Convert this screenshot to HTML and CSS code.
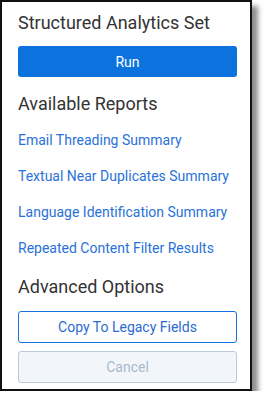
FILE: index.html
```html
<!DOCTYPE html>
<html lang="en">
<head>
    <meta charset="UTF-8">
    <meta name="viewport" content="width=device-width, initial-scale=1.0">
    <title>Structured Analytics Set</title>
    <link rel="stylesheet" href="styles.css">
</head>
<body>
    <div class="panel">
        <h2 class="section-title">Structured Analytics Set</h2>
        <button class="btn btn-primary run-btn">Run</button>

        <h2 class="section-title reports-title">Available Reports</h2>
        <div class="report-list">
            <a href="#" class="report-link">Email Threading Summary</a>
            <a href="#" class="report-link">Textual Near Duplicates Summary</a>
            <a href="#" class="report-link">Language Identification Summary</a>
            <a href="#" class="report-link">Repeated Content Filter Results</a>
        </div>

        <h2 class="section-title options-title">Advanced Options</h2>
        <div class="option-buttons">
            <button class="btn btn-outline">Copy To Legacy Fields</button>
            <button class="btn btn-disabled" disabled>Cancel</button>
        </div>
    </div>
</body>
</html>
```

FILE: styles.css
```css
* {
    margin: 0;
    padding: 0;
    box-sizing: border-box;
}
body {
    font-family: Roboto, "Liberation Sans", sans-serif;
    background: #fff;
}
.panel {
    width: 252px;
    height: 391px;
    padding: 10px 13px 0 16px;
    border: 2px solid #111;
    background: #fff;
    box-shadow: 6px 6px 5px rgba(0, 0, 0, 0.45);
    display: flex;
    flex-direction: column;
}
.section-title {
    font-size: 18px;
    line-height: 22px;
    font-weight: 400;
    color: #333;
}
.btn {
    width: 100%;
    height: 32px;
    font-family: inherit;
    font-size: 14px;
    border-radius: 3px;
    cursor: pointer;
}
.btn-primary {
    background: #0b72de;
    color: #fff;
    border: none;
}
.run-btn {
    margin-top: 12px;
    height: 31px;
}
.reports-title {
    margin-top: 16px;
}
.report-list {
    display: flex;
    flex-direction: column;
    gap: 16px;
    margin-top: 15px;
}
.report-link {
    font-size: 14px;
    line-height: 20px;
    color: #2a72d8;
    text-decoration: none;
}
.options-title {
    margin-top: 18px;
}
.option-buttons {
    display: flex;
    flex-direction: column;
    gap: 8px;
    margin-top: 13px;
}
.btn-outline {
    background: #fff;
    color: #2a6cd4;
    border: 1px solid #1473e0;
}
.btn-disabled {
    background: #f2f6fa;
    color: #a9b9cd;
    border: 1px solid #bccadb;
    cursor: default;
}
```
